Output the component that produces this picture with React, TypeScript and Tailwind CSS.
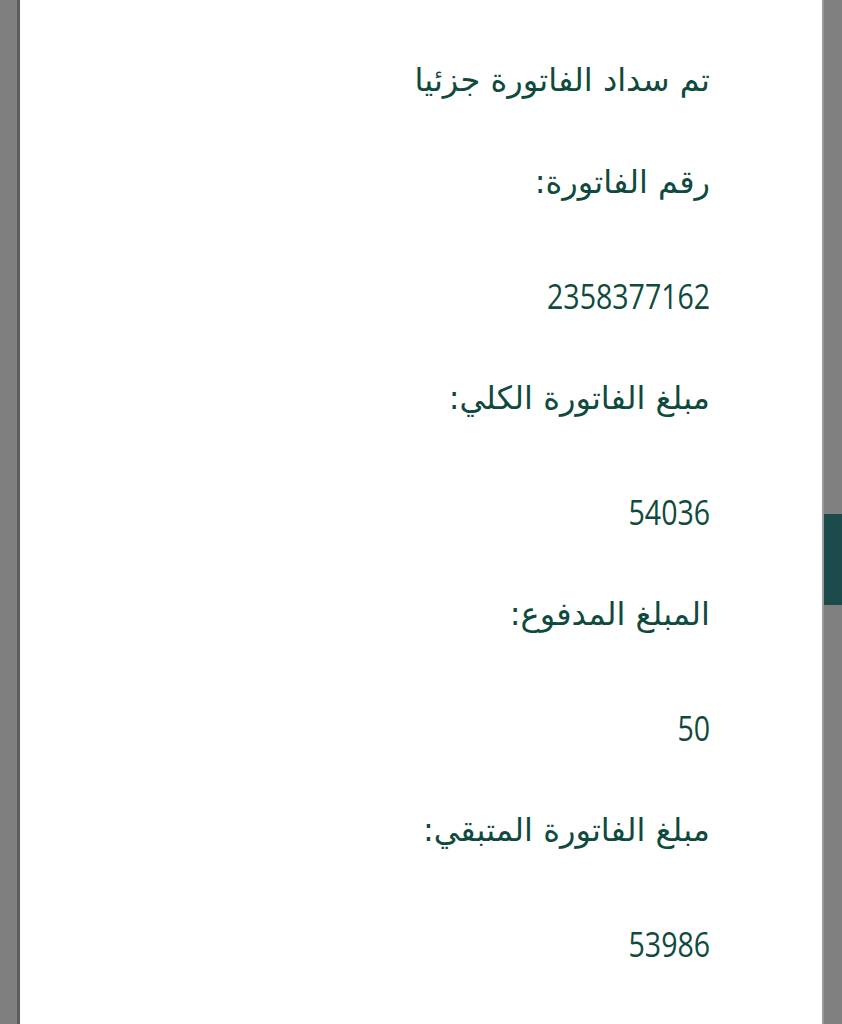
const ROWS = [
  { text: "تم سداد الفاتورة جزئيا", kind: "title" },
  { text: "رقم الفاتورة:", kind: "label" },
  { text: "2358377162", kind: "value" },
  { text: "مبلغ الفاتورة الكلي:", kind: "label" },
  { text: "54036", kind: "value" },
  { text: "المبلغ المدفوع:", kind: "label" },
  { text: "50", kind: "value" },
  { text: "مبلغ الفاتورة المتبقي:", kind: "label" },
  { text: "53986", kind: "value" },
];

export default function App() {
  return (
    <div className="flex h-screen w-full overflow-hidden bg-[#808080]">
      <div className="w-[17px] shrink-0 bg-[#7f7f7f]" />
      <div className="w-[3px] shrink-0 bg-[#5c5c5c]" />
      <div
        dir="rtl"
        className="flex flex-1 flex-col bg-white pr-[112px] pt-[26px] text-[#0f4a3e]"
      >
        {ROWS.map((row, i) =>
          row.kind === "value" ? (
            <div key={i} className="flex h-[108px] items-center">
              <span className="inline-block origin-right scale-x-[0.815] font-['Open_Sans',sans-serif] text-[35px]">
                {row.text}
              </span>
            </div>
          ) : (
            <div
              key={i}
              className={
                row.kind === "label"
                  ? "flex h-[108px] items-center pb-[12px] font-['DejaVu_Sans',sans-serif] text-[32px]"
                  : "flex h-[108px] items-center font-['DejaVu_Sans',sans-serif] text-[32px]"
              }
            >
              {row.text}
            </div>
          )
        )}
      </div>
      <div className="w-[2px] shrink-0 bg-[#9a9a9a]" />
      <div className="flex w-[18px] shrink-0 flex-col bg-[#808080] pt-[514px]">
        <div className="h-[91px] bg-[#1b4b4a]" />
      </div>
    </div>
  );
}
